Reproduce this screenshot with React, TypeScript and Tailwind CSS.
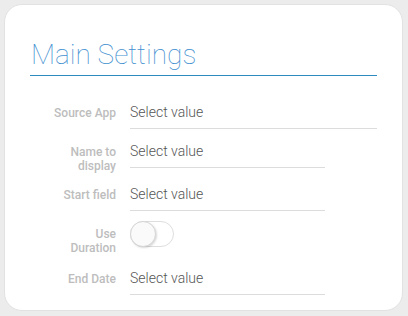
export default function App() {
  const label = "w-[86px] shrink-0 text-right text-[12px] leading-[14px] font-medium text-[#bdbdbd]";
  const value = "h-[32px] flex items-center border-b border-[#dcdcdc] text-[14px] font-light text-[#555555]";

  return (
    <div className="w-[408px] h-[316px] bg-[#ececec] p-[4px] font-['Roboto',sans-serif]">
      <div className="h-[307px] w-[399px] rounded-[18px] border border-[#e2e2e2] bg-white px-[25px] pt-[34px]">
        {/* Title */}
        <div className="border-b border-[#2f8cc0] pb-[5px] pl-[1px] text-[28px] leading-[31px] font-thin text-[#3f8fd0]">
          Main Settings
        </div>

        <div className="mt-[21px] flex flex-col">
          {/* Source App */}
          <div className="flex items-start gap-[14px]">
            <div className={`${label} pt-[9px]`}>Source App</div>
            <div className={`${value} w-[248px]`}>Select value</div>
          </div>

          {/* Name to display */}
          <div className="mt-[7px] flex items-start gap-[14px]">
            <div className={`${label} pt-[9px]`}>
              Name to
              <br />
              display
            </div>
            <div className={`${value} w-[195px]`}>Select value</div>
          </div>

          {/* Start field */}
          <div className="mt-[6px] flex items-start gap-[14px]">
            <div className={`${label} pt-[9px]`}>Start field</div>
            <div className={`${value} w-[195px]`}>Select value</div>
          </div>

          {/* Use Duration */}
          <div className="mt-[10px] flex items-start gap-[14px]">
            <div className={`${label} pt-[6px]`}>
              Use
              <br />
              Duration
            </div>
            <div className="relative h-[26px] w-[44px] rounded-full border border-[#dedede] bg-white">
              <div className="absolute left-[-1px] top-[-1px] h-[26px] w-[26px] rounded-full border border-[#d6d6d6] bg-[#fafafa] shadow-[1px_1px_2px_rgba(0,0,0,0.15)]" />
            </div>
          </div>

          {/* End Date */}
          <div className="mt-[8px] flex items-start gap-[14px]">
            <div className={`${label} pt-[9px]`}>End Date</div>
            <div className={`${value} w-[195px]`}>Select value</div>
          </div>
        </div>
      </div>
    </div>
  );
}
